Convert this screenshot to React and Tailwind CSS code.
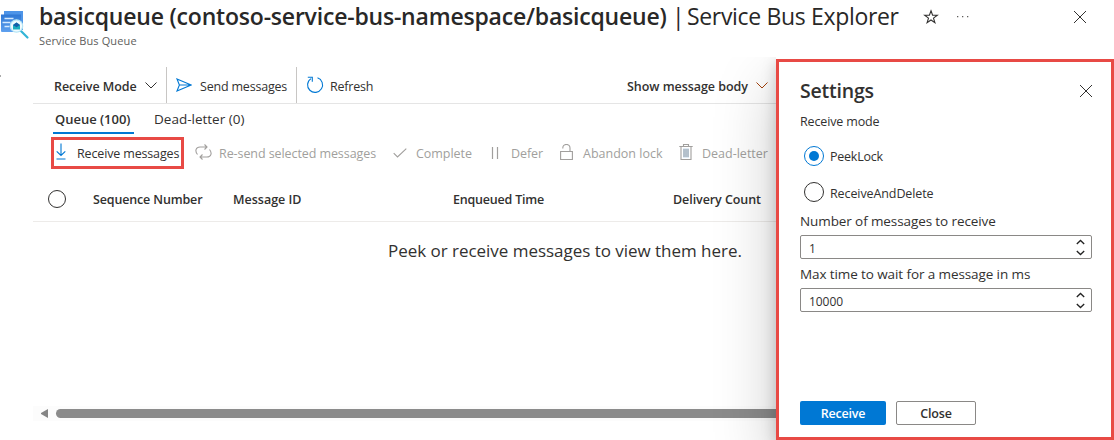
import React from 'react';

function Close() {
  return (
    <svg className="h-3.5 w-3.5 text-[#323130]" viewBox="0 0 14 14" fill="none" stroke="currentColor" strokeWidth="1">
      <path d="M1 1l12 12M13 1L1 13" />
    </svg>
  );
}

function Chevron({ className }) {
  return (
    <svg className={`h-[7px] w-3 shrink-0 ${className}`} viewBox="0 0 12 7" fill="none" stroke="currentColor">
      <path d="M.5 .5L6 6l5.500-5.500" />
    </svg>
  );
}

function QueueIcon() {
  return (
    <svg className="h-[30px] w-[30px] shrink-0" viewBox="0 0 30 30">
      <defs>
        <linearGradient id="page" x1="0" y1="0" x2="0" y2="1">
          <stop offset="0" stopColor="#2f78d4" />
          <stop offset="1" stopColor="#5ea0ef" />
        </linearGradient>
      </defs>
      <path d="M4 1h19v19H4z" fill="#4d94e8" />
      <path d="M1 4.500h20v17.500H2a1 1 0 0 1-1-1z" fill="url(#page)" />
      <path d="M4.500 8.500h9M2.500 12.500h8M4.500 16.500h5" stroke="#d4e9ff" strokeWidth="1.400" />
      <path d="M21 21l6.500 6.500" stroke="#32b4d6" strokeWidth="2.200" strokeLinecap="round" />
      <circle cx="16.500" cy="16" r="6.200" fill="#f1fbff" stroke="#b5e6f5" strokeWidth="1.200" />
      <path d="M13 15l3.500-2.500 3.500 2.500v4.500h-7z" fill="#1aaebf" />
      <path d="M13 15l3.500 2.200 3.500-2.200-3.500-2.500z" fill="#155ea8" />
    </svg>
  );
}

function Spin() {
  return (
    <svg className="h-[17px] w-[9px] shrink-0 text-[#222]" viewBox="0 0 9 17" fill="none" stroke="currentColor" strokeWidth="1.300">
      <path d="M.8 5L4.500 1.500 8.200 5M.8 12l3.700 3.500L8.200 12" />
    </svg>
  );
}

function NumberField({ value }) {
  return (
    <div className="flex h-6 w-[292px] items-center justify-between rounded-xs border border-[#8a8886] pr-[6px] pl-[8px]">
      <span className="pt-[3px] text-[12px] tracking-[-0.05px]">{value}</span>
      <Spin />
    </div>
  );
}

export default function App() {
  return (
    <div className="flex h-[440px] w-[1114px] flex-col overflow-hidden bg-white font-['Open_Sans','Noto_Sans',sans-serif] text-[13px] whitespace-nowrap text-[#323130]">
      <header className="flex h-[57px] shrink-0">
        <div className="w-[39px] pt-[10px]"><QueueIcon /></div>
        <div className="w-[884px]">
          <h1 className="flex h-[33px] items-center text-[23px] text-[#292827]">
            <span className="w-[633px] font-semibold tracking-[-0.2px]">basicqueue (contoso-service-bus-namespace/basicqueue)</span>
            <span className="w-[15px]">|</span>
            <span className="tracking-[-0.33px]">Service Bus Explorer</span>
          </h1>
          <div className="h-4 text-[11px] leading-[15px] tracking-[0.12px] text-[#605e5c]">Service Bus Queue</div>
        </div>
        <div className="flex h-[34px] items-center">
          <svg className="h-4 w-4 text-[#323130]" viewBox="0 0 16 16" fill="none" stroke="currentColor" strokeWidth="1.100">
            <path d="M8 1.800l1.600 4.400h4.700l-3.800 2.900 1.400 4.600L8 11l-3.900 2.700 1.400-4.600-3.800-2.900h4.700z" />
          </svg>
          <svg className="ml-[18px] h-1 w-3 text-[#605e5c]" viewBox="0 0 12 4" fill="currentColor">
            <path d="M0 1h1.300v1.300H0zM5 1h1.300v1.300H5zM10 1h1.300v1.300H10z" />
          </svg>
          <div className="ml-[104px]"><Close /></div>
        </div>
      </header>

      <div className="flex min-h-0 flex-1 overflow-hidden">
        <div className="w-[33px] shrink-0 pt-[18px]"><div className="h-[2px] w-px bg-[#aaa]" /></div>
        <main className="flex w-[743px] shrink-0 flex-col pt-[10px]">
          <div className="flex h-[37px] shrink-0 border-b border-[#e5e5e5]">
            <div className="flex w-[134px] items-center border-r border-[#c8c6c4] pl-[21px]">
              <span className="w-[91px] pt-[4px] text-[12.500px] font-semibold tracking-[-0.05px]">Receive Mode</span>
              <Chevron className="text-[#323130]" />
            </div>
            <div className="flex w-[130px] items-center border-r border-[#c8c6c4] pl-[9px]">
              <svg className="h-[14px] w-4 text-[#0078d4]" viewBox="0 0 16 14" fill="none" stroke="currentColor" strokeWidth="1.100">
                <path d="M1 1l14.200 6L1 13l2.400-6zM3.400 7h11.800" />
              </svg>
              <span className="ml-2 pt-[4px] text-[12.500px] tracking-[-0.2px]">Send messages</span>
            </div>
            <div className="flex w-[330px] items-center pl-[9px]">
              <svg className="h-[18px] w-[18px] text-[#0078d4]" viewBox="0 0 18 18" fill="none" stroke="currentColor" strokeWidth="1.100">
                <path d="M11.500 1.800A7.500 7.500 0 1 1 5 2.600M1.800 1.300h4.500v4.500" />
              </svg>
              <span className="ml-[6px] pt-[4px] text-[12.500px] tracking-[-0.2px]">Refresh</span>
            </div>
            <div className="flex items-center">
              <span className="w-[129px] pt-[4px] text-[12.500px] font-semibold tracking-[-0.05px]">Show message body</span>
              <Chevron className="text-[#a4420c]" />
            </div>
          </div>

          <div className="flex h-[30px] shrink-0 pl-5">
            <div className="flex w-[81px] items-center border-b-2 border-[#0078d4] pt-[3px] pl-[2px] font-semibold tracking-[-0.02px]">Queue (100)</div>
            <div className="ml-5 flex items-center pt-px text-[13.500px]">Dead-letter (0)</div>
          </div>

          <div className="mt-[3px] flex h-8 shrink-0 items-center pl-[18px] text-[12.500px]">
            <div className="flex h-8 w-[133px] shrink-0 items-center border-[3px] border-[#e84a45] pl-[2px]">
              <svg className="mb-[3px] h-[17px] w-[10px] text-[#0078d4]" viewBox="0 0 10 17" fill="none" stroke="currentColor" strokeWidth="1.100">
                <path d="M5 .5v12M.7 8.300L5 12.500l4.300-4.200M.5 16h9" />
              </svg>
              <span className="ml-[11px] pt-[2px] tracking-[-0.15px]">Receive messages</span>
            </div>
            <div className="flex shrink-0 items-center text-[#a19f9d]">
              <svg className="mb-[2px] ml-[11px] h-4 w-[17px]" viewBox="0 0 17 16" fill="none" stroke="currentColor" strokeWidth="1.100">
                <path d="M2.500 10.500C-.5 7 1 3 5 3h7M9.500 .5L12 3 9.500 5.500M14.500 5.500c3 3.500 1.500 7.500-2.500 7.500H5M7.500 10.500L5 13l2.500 2.500" />
              </svg>
              <span className="ml-[7px] w-[174px] pt-[2px] tracking-[-0.08px]">Re-send selected messages</span>
              <svg className="mb-px h-[10px] w-[14px]" viewBox="0 0 14 10" fill="none" stroke="currentColor" strokeWidth="1.100">
                <path d="M.7 5.200l3.800 3.800L13.300 .7" />
              </svg>
              <span className="ml-[9px] w-[75px] pt-[2px] tracking-[-0.05px]">Complete</span>
              <svg className="mb-px h-[12px] w-2" viewBox="0 0 8 12" fill="none" stroke="currentColor" strokeWidth="1.200">
                <path d="M1.500 0v12M6.500 0v12" />
              </svg>
              <span className="ml-[12px] w-[49px] pt-[2px] tracking-[-0.1px]">Defer</span>
              <svg className="mb-[2px] h-4 w-[13px]" viewBox="0 0 13 16" fill="none" stroke="currentColor" strokeWidth="1.100">
                <path d="M.6 7.500h11.800v8H.6zM2.800 4.500V4a3.600 3.600 0 0 1 7.200 0v3.500" />
              </svg>
              <span className="ml-[10px] w-[96px] pt-[2px]">Abandon lock</span>
              <svg className="mb-[2px] h-4 w-[14px]" viewBox="0 0 14 16" fill="none" stroke="currentColor" strokeWidth="1.100">
                <path fill="#c2d7eb" stroke="none" d="M4 4.500h6v9H4z" />
                <path d="M.3 2.500h13.400M2 2.500v13h10v-13M4.500 2.500v-2h5v2" />
                <path d="M5 5v8M7 5v8M9 5v8" strokeWidth=".8" />
              </svg>
              <span className="ml-[9px] pt-[2px]">Dead-letter</span>
            </div>
          </div>

          <div className="mt-[9px] flex h-11 shrink-0 items-center border-b border-[#edebe9] pl-[15px] text-[12.500px] font-semibold">
            <div className="w-[45px] pb-[2px]"><div className="h-[18px] w-[18px] rounded-full border border-[#323130]" /></div>
            <span className="w-[140px] pt-[2px] tracking-[-0.15px]">Sequence Number</span>
            <span className="w-[220px] pt-[2px]">Message ID</span>
            <span className="w-[220px] pt-[2px] tracking-[-0.2px]">Enqueued Time</span>
            <span className="pt-[2px] tracking-[-0.07px]">Delivery Count</span>
          </div>
          <p className="mt-[15px] pl-[355px] text-[17px] leading-[28px] tracking-[-0.03px]">Peek or receive messages to view them here.</p>

          <div className="mt-auto mb-[19px] flex h-[15px] shrink-0 items-center bg-[#fcfcfc] pl-2">
            <svg className="h-[9px] w-[7px] text-[#858585]" viewBox="0 0 7 9" fill="currentColor"><path d="M7 0v9L0 5V4z" /></svg>
            <div className="ml-2 h-[9px] flex-1 rounded-l-full bg-[#8b8b8b]" />
          </div>
        </main>

        <aside className="flex w-[338px] shrink-0 shadow-[0_26px_58px_0_rgba(0,0,0,0.22),0_5px_14px_0_rgba(0,0,0,0.18)]">
          <div className="mt-[2px] flex w-[338px] flex-col border-[3px] border-[#e84a45] bg-white pl-[21px]">
            <div className="mt-[13px] flex h-8 w-[293px] items-center justify-between">
              <h2 className="text-[19.500px] font-semibold tracking-[-0.2px]">Settings</h2>
              <Close />
            </div>
            <div className="mt-[5px] h-5 text-[12.500px] leading-[20px] tracking-[-0.15px]">Receive mode</div>
            <div className="mt-[11px] ml-1 flex h-[25px] items-center">
              <div className="flex h-5 w-5 items-center justify-center rounded-full border border-[#0078d4]">
                <div className="h-[10px] w-[10px] rounded-full bg-[#0078d4]" />
              </div>
              <span className="ml-[6px] pt-[4px] text-[12.500px] tracking-[-0.25px]">PeekLock</span>
            </div>
            <div className="mt-[11px] ml-1 flex h-[25px] items-center">
              <div className="h-5 w-5 rounded-full border border-[#323130]" />
              <span className="ml-[6px] pt-[5px] text-[12.500px] tracking-[-0.1px]">ReceiveAndDelete</span>
            </div>
            <div className="mt-[7px] mb-1 h-5 text-[13.500px] leading-[20px] tracking-[-0.1px]">Number of messages to receive</div>
            <NumberField value="1" />
            <div className="mt-[5px] mb-1 h-5 text-[13.500px] leading-[20px] tracking-[-0.1px]">Max time to wait for a message in ms</div>
            <NumberField value="10000" />
            <div className="mt-auto mb-3 flex gap-[10px] text-[12.500px]">
              <button className="h-6 w-[86px] rounded-xs bg-[#0078d4] pt-[2px] font-semibold tracking-[-0.2px] text-white">Receive</button>
              <button className="h-6 w-20 rounded-xs border border-[#8a8886] pt-[2px] font-semibold tracking-[-0.2px]">Close</button>
            </div>
          </div>
        </aside>
      </div>
    </div>
  );
}
